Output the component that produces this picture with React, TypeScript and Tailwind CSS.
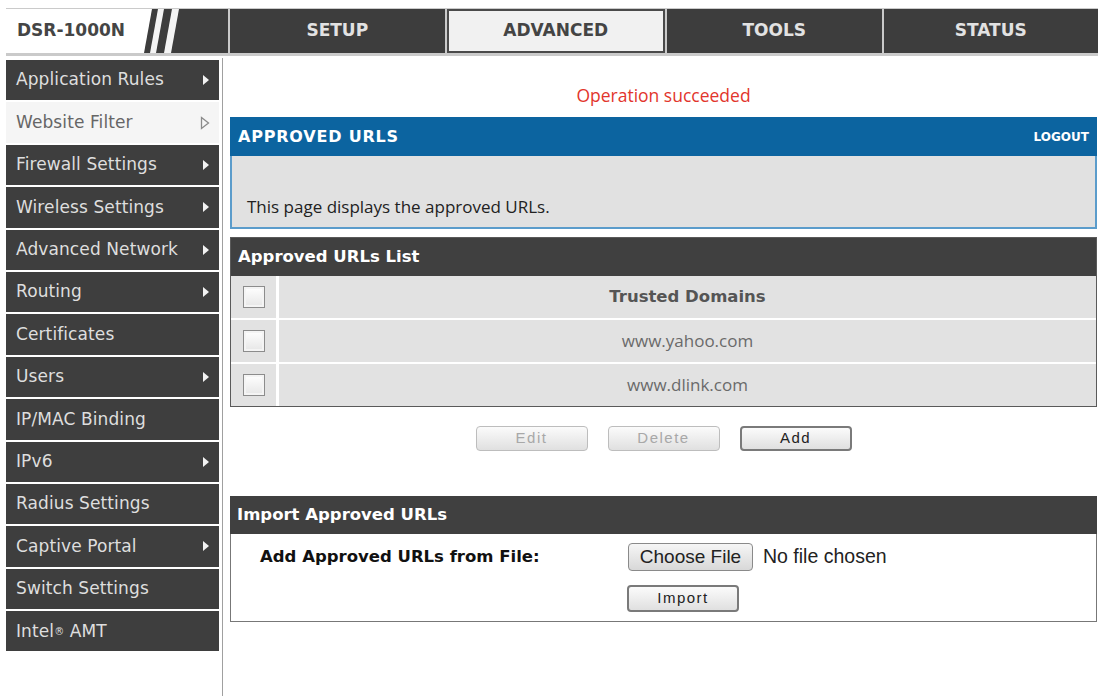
import React from "react";

const sideItems: { label: React.ReactNode; arrow: boolean; active?: boolean }[] = [
  { label: "Application Rules", arrow: true },
  { label: "Website Filter", arrow: true, active: true },
  { label: "Firewall Settings", arrow: true },
  { label: "Wireless Settings", arrow: true },
  { label: "Advanced Network", arrow: true },
  { label: "Routing", arrow: true },
  { label: "Certificates", arrow: false },
  { label: "Users", arrow: true },
  { label: "IP/MAC Binding", arrow: false },
  { label: "IPv6", arrow: true },
  { label: "Radius Settings", arrow: false },
  { label: "Captive Portal", arrow: true },
  { label: "Switch Settings", arrow: false },
  {
    label: (
      <span>
        Intel<sup className="text-[10px] relative top-[-2px]">®</sup> AMT
      </span>
    ),
    arrow: false,
  },
];

function Arrow({ active }: { active?: boolean }) {
  if (active) {
    return (
      <svg width="10" height="14" viewBox="0 0 10 14" className="shrink-0">
        <path d="M1.5 1.5 L8.5 7 L1.5 12.5 Z" fill="none" stroke="#8a8a8a" strokeWidth="1.3" />
      </svg>
    );
  }
  return (
    <svg width="8" height="12" viewBox="0 0 8 12" className="shrink-0">
      <path d="M1 1 L7 6 L1 11 Z" fill="#f2f2f2" />
    </svg>
  );
}

function Checkbox() {
  return (
    <div className="w-[22px] h-[22px] border border-[#8c8c8c] bg-gradient-to-b from-[#ffffff] to-[#e6e6e6] shadow-[inset_0_0_0_2px_#f4f4f4]" />
  );
}

function Btn({
  children,
  disabled,
  h = "h-[25px]",
}: {
  children: React.ReactNode;
  disabled?: boolean;
  h?: string;
}) {
  return (
    <div
      className={`w-[112px] ${h} rounded-[4px] flex items-center justify-center text-[15px] tracking-[1.5px] bg-gradient-to-b from-[#fbfbfb] to-[#e0e0e0] ${
        disabled
          ? "border border-[#bdbdbd] text-[#a8a8a8]"
          : "border-2 border-[#7a7a7a] text-[#222]"
      }`}
      style={{ fontFamily: '"Liberation Sans", Arial, sans-serif' }}
    >
      {children}
    </div>
  );
}

export default function App() {
  const tahoma = { fontFamily: '"Open Sans", "DejaVu Sans", sans-serif' };
  const bold = { fontFamily: '"DejaVu Sans", Verdana, sans-serif' };
  const arial = { fontFamily: '"Liberation Sans", Arial, sans-serif' };
  return (
    <div className="w-[1104px] h-[696px] bg-white overflow-hidden">
      {/* Top navigation */}
      <div className="pt-[8px] px-[6px]">
        <div className="flex gap-[2px] bg-[#cacaca] pt-[1px] pb-[3px]">
          <div className="relative w-[222px] h-[44px] bg-[#3d3d3d] shrink-0">
            <svg width="222" height="44" viewBox="0 0 222 44" className="absolute inset-0">
              <polygon points="0,0 146,0 138,44 0,44" fill="#ffffff" />
              <polygon points="152,0 158,0 150,44 144,44" fill="#f4f4f4" />
              <polygon points="166,0 173,0 165,44 158,44" fill="#f4f4f4" />
            </svg>
            <div
              className="absolute left-[11px] top-0 h-[44px] flex items-center text-[17px] font-bold text-[#454545]"
              style={bold}
            >
              DSR-1000N
            </div>
          </div>
          {["SETUP", "ADVANCED", "TOOLS", "STATUS"].map((t) => (
            <div
              key={t}
              className={`flex-1 h-[44px] flex items-center justify-center text-[17px] font-bold ${
                t === "ADVANCED"
                  ? "bg-[#f1f1f1] text-[#444] border-2 border-[#4a4a4a]"
                  : "bg-[#3d3d3d] text-[#e2e2e2]"
              }`}
              style={bold}
            >
              {t}
            </div>
          ))}
        </div>
      </div>

      {/* Body */}
      <div className="flex pl-[6px]">
        {/* Sidebar */}
        <div className="w-[213px] shrink-0 pt-[4px] bg-white">
          {sideItems.map((it, i) => (
            <div
              key={i}
              className={`h-[40.4px] mb-[2px] flex items-center justify-between pl-[10px] pr-[9px] text-[17px] tracking-[0.1px] ${
                it.active ? "bg-[#f5f5f5] text-[#666]" : "bg-[#3e3e3e] text-[#dedede]"
              }`}
              style={bold}
            >
              <span>{it.label}</span>
              {it.arrow ? <Arrow active={it.active} /> : null}
            </div>
          ))}
        </div>

        {/* Content */}
        <div className="flex-1 ml-[3px] border-l border-[#a0a0a0] pl-[7px] pr-[7px] h-[640px] mt-[2px]">
          <div className="h-[59px] flex items-end justify-center pb-[11px]">
            <span className="text-[17.5px] text-[#e2352c] leading-[22px]" style={tahoma}>
              Operation succeeded
            </span>
          </div>

          {/* Approved URLs header */}
          <div className="h-[39px] bg-[#0c64a0] flex items-center justify-between pl-[8px] pr-[8px]">
            <span className="text-[16px] font-bold text-white tracking-[0.8px]" style={bold}>
              APPROVED URLS
            </span>
            <span className="text-[12px] font-bold text-white" style={bold}>
              LOGOUT
            </span>
          </div>
          <div className="h-[73px] bg-[#e1e1e1] border-x-2 border-b-2 border-[#5b9ccb] pl-[15px] pt-[39px]">
            <span className="text-[17px] text-[#222] leading-[22px]" style={tahoma}>
              This page displays the approved URLs.
            </span>
          </div>

          {/* Approved URLs list */}
          <div className="mt-[8px] border border-[#5a5a5a] bg-white">
            <div className="h-[38px] bg-[#404040] flex items-center pl-[7px]">
              <span className="text-[16.5px] font-bold text-white" style={bold}>
                Approved URLs List
              </span>
            </div>
            {[
              { text: "Trusted Domains", head: true },
              { text: "www.yahoo.com" },
              { text: "www.dlink.com" },
            ].map((r, i) => (
              <div key={i} className={`flex h-[42px] bg-[#e2e2e2] ${i > 0 ? "mt-[2px]" : ""}`}>
                <div className="w-[45px] flex items-center justify-center">
                  <Checkbox />
                </div>
                <div className="w-[3px] bg-white" />
                <div
                  className={`flex-1 flex items-center justify-center ${
                    r.head ? "font-bold text-[#555] text-[16.5px]" : "text-[#6a6a6a] text-[17px]"
                  }`}
                  style={r.head ? bold : tahoma}
                >
                  {r.text}
                </div>
              </div>
            ))}
          </div>

          {/* Buttons */}
          <div className="flex justify-center gap-[20px] mt-[19px]">
            <Btn disabled>Edit</Btn>
            <Btn disabled>Delete</Btn>
            <Btn>Add</Btn>
          </div>

          {/* Import */}
          <div className="mt-[45px]">
            <div className="h-[38px] bg-[#404040] flex items-center pl-[7px]">
              <span className="text-[16.5px] font-bold text-white" style={bold}>
                Import Approved URLs
              </span>
            </div>
            <div className="h-[88px] border border-t-0 border-[#777] pt-[9px]">
              <div className="flex items-center h-[28px]">
                <div className="w-[397px] pl-[29px] text-[16.5px] font-bold text-[#111]" style={bold}>
                  Add Approved URLs from File:
                </div>
                <div
                  className="h-[28px] w-[125px] rounded-[4px] border border-[#8a8a8a] bg-gradient-to-b from-[#f6f6f6] to-[#d8d8d8] flex items-center justify-center text-[19px] text-[#222]"
                  style={arial}
                >
                  Choose File
                </div>
                <span className="ml-[10px] text-[19.5px] text-[#222]" style={arial}>
                  No file chosen
                </span>
              </div>
              <div className="pl-[396px] mt-[14px]">
                <Btn h="h-[27px]">Import</Btn>
              </div>
            </div>
          </div>
        </div>
      </div>
    </div>
  );
}
